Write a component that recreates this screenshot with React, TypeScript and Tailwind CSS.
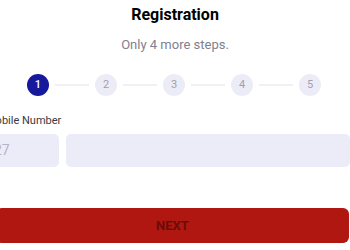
export default function App() {
  const steps = [1, 2, 3, 4, 5];

  return (
    <div className="w-[350px] h-[250px] overflow-hidden bg-white font-['Roboto',sans-serif]">
      <div className="pt-[5px] text-center text-[16px] leading-[20px] font-bold text-black">Registration</div>
      <div className="mt-[11px] text-center text-[13px] leading-[18px] text-[#80808f]">Only 4 more steps.</div>

      {/* Stepper */}
      <div className="mt-[20px] flex items-center pl-[27px]">
        {steps.map((s, i) => (
          <div key={s} className="flex items-center">
            <div
              className={
                s === 1
                  ? 'w-[22px] h-[22px] rounded-full bg-[#16199b] text-white flex items-center justify-center text-[11px] font-medium'
                  : 'w-[22px] h-[22px] rounded-full bg-[#ececf7] text-[#a0a0b2] flex items-center justify-center text-[11px]'
              }
            >
              {s}
            </div>
            {i < steps.length - 1 && <div className="mx-[6px] w-[34px] h-[2px] bg-[#f1f1f5]" />}
          </div>
        ))}
      </div>

      {/* Mobile number */}
      <div className="mt-[17px] ml-[-24px] w-[374px]">
        <div className="pl-[10px] text-[11px] leading-[16px] text-[#3a3a40]">Mobile Number</div>
        <div className="mt-[5px] flex gap-[7px]">
          <div className="w-[83px] h-[33px] rounded-[5px] bg-[#ececf8] flex items-center pl-[10px] text-[14px] text-[#b4b4c4]">
            +27
          </div>
          <div className="flex-1 h-[33px] rounded-[5px] bg-[#ececf8]" />
        </div>
      </div>

      <button className="mt-[41px] ml-[-4px] w-[353px] h-[35px] rounded-[6px] bg-[#b01711] text-[13px] font-bold text-[#6a0c08] flex items-center justify-center">
        NEXT
      </button>
    </div>
  );
}
